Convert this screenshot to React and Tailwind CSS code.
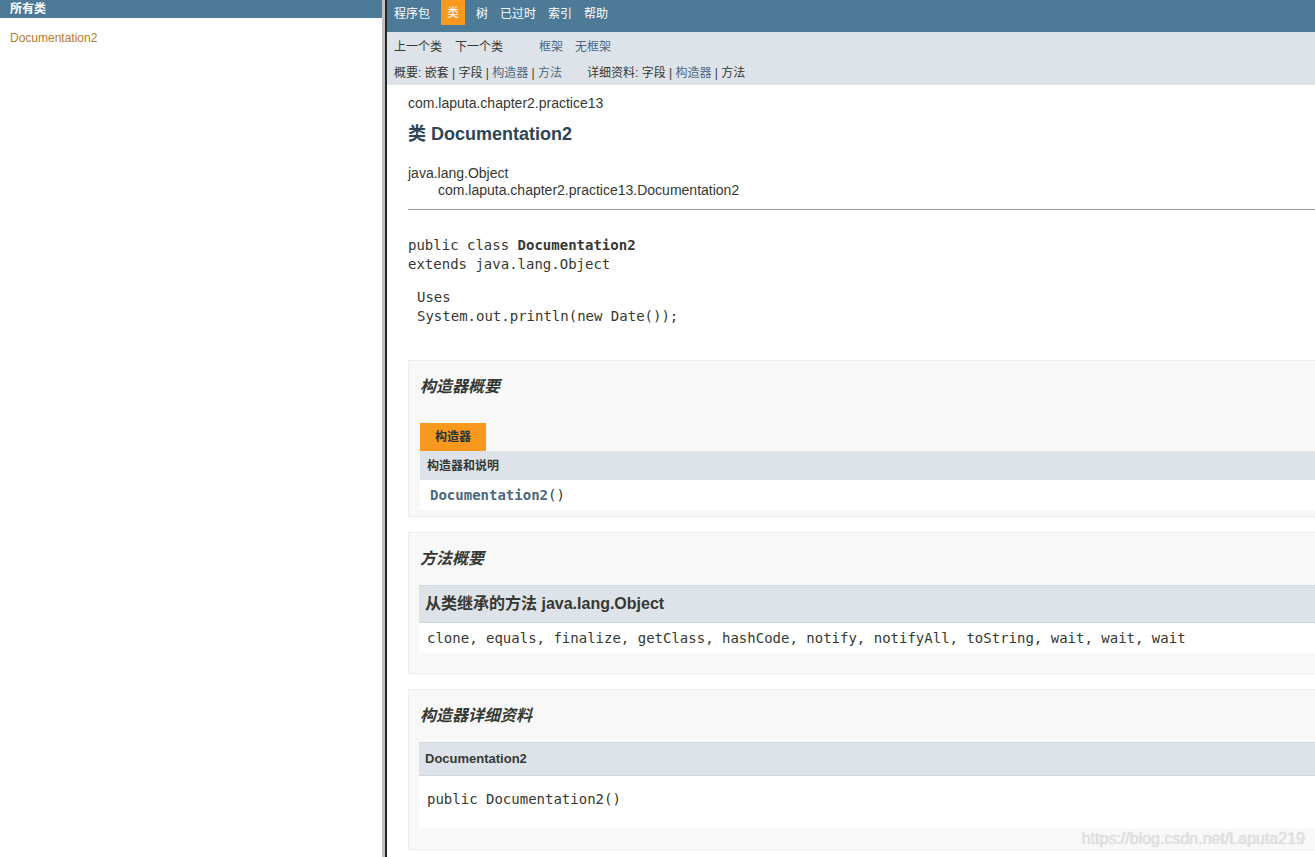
import React from 'react';

const sans = { fontFamily: '"Liberation Sans", Arial, "Noto Sans CJK SC", sans-serif' };
const mono = { fontFamily: '"DejaVu Sans Mono", monospace' };

const Block = ({ title, children, className = '' }) => (
  <div className={`border border-[#ededed] bg-[#f8f8f8] ${className}`}>
    <h3 className="pl-[11px] h-[52px] flex items-center text-[16px] italic font-bold text-[#353833]">{title}</h3>
    {children}
  </div>
);

export default function App() {
  return (
    <div className="flex h-[857px] w-[1315px] overflow-hidden bg-white text-[#353833]" style={sans}>
      {/* left frame */}
      <div className="w-[382px] shrink-0 bg-white">
        <div className="h-[18px] bg-[#4d7a97] pl-[10px] text-[12px] font-bold leading-[18px] text-white">所有类</div>
        <div className="pl-[10px] pt-[11px] text-[12px] text-[#bb7a2a]">Documentation2</div>
      </div>
      <div className="w-[3px] shrink-0 bg-[#c0c0c0]" />
      <div className="w-[2px] shrink-0 bg-[#262626]" />

      {/* right frame */}
      <div className="relative flex-1 overflow-hidden">
        <div className="h-[32px] bg-[#4d7a97] pl-[1px]">
          <ul className="flex text-[12px] text-white">
            <li className="h-[25px] px-[6px] pt-[2px] leading-[25px]">程序包</li>
            <li className="ml-[5px] h-[25px] bg-[#f8981d] px-[6px] pt-[2px] leading-[23px]">类</li>
            <li className="ml-[5px] h-[25px] px-[6px] pt-[2px] leading-[25px]">树</li>
            <li className="h-[25px] px-[6px] pt-[2px] leading-[25px]">已过时</li>
            <li className="h-[25px] px-[6px] pt-[2px] leading-[25px]">索引</li>
            <li className="h-[25px] px-[6px] pt-[2px] leading-[25px]">帮助</li>
          </ul>
        </div>
        <div className="h-[53px] bg-[#dee3e9] pl-[7px] text-[12px]">
          <div className="flex h-[27px] items-center pt-[3px]">
            <span>上一个类</span>
            <span className="ml-[13px]">下一个类</span>
            <span className="ml-[36px] text-[#4a6782]">框架</span>
            <span className="ml-[12px] text-[#4a6782]">无框架</span>
          </div>
          <div className="flex h-[26px] items-center pt-[2px]">
            <div className="w-[193px]">
              概要: 嵌套 | 字段 | <span className="text-[#4a6782]">构造器</span> | <span className="text-[#4a6782]">方法</span>
            </div>
            <div>
              详细资料: 字段 | <span className="text-[#4a6782]">构造器</span> | 方法
            </div>
          </div>
        </div>

        <div className="w-[970px] pl-[21px]">
          <div className="pt-[10px] text-[14px] leading-[17px]">com.laputa.chapter2.practice13</div>
          <h2 className="mt-[9px] h-[26px] text-[18px] font-bold leading-[26px] text-[#2c4557]">类 Documentation2</h2>
          <div className="mt-[18px] text-[14px] leading-[17px]">
            <div>java.lang.Object</div>
            <div className="pl-[30px]">com.laputa.chapter2.practice13.Documentation2</div>
          </div>
          <div className="mt-[10px] border-t border-[#999999]" />
          <div className="mt-[26px] text-[14px] leading-[19px]" style={mono}>
            <div>public class <span className="font-bold">Documentation2</span></div>
            <div>extends java.lang.Object</div>
            <div className="mt-[14px] pl-[9px]">Uses</div>
            <div className="pl-[9px]">System.out.println(new Date());</div>
          </div>

          <Block title="构造器概要" className="mt-[34px] pb-[6px]">
            <div className="ml-[11px]">
              <div className="mt-[10px] flex h-[28px] w-[66px] items-center justify-center bg-[#f8981d] text-[12px] font-bold text-[#253441]">构造器</div>
              <div className="flex h-[29px] items-center bg-[#dee3e9] pl-[7px] text-[12px] font-bold">构造器和说明</div>
              <div className="flex h-[30px] items-center bg-white pl-[10px] text-[14px]" style={mono}>
                <span className="font-bold text-[#4a6782]">Documentation2</span>()
              </div>
            </div>
          </Block>

          <Block title="方法概要" className="mt-[15px] pb-[20px]">
            <div className="ml-[10px]">
              <div className="flex h-[38px] items-center border-y border-[#d0d9e0] bg-[#dee3e9] pl-[6px] text-[16px] font-bold">从类继承的方法 java.lang.Object</div>
              <div className="flex h-[30px] items-center bg-white pl-[8px] text-[14px]" style={mono}>
                clone, equals, finalize, getClass, hashCode, notify, notifyAll, toString, wait, wait, wait
              </div>
            </div>
          </Block>

          <Block title="构造器详细资料" className="mt-[15px] pb-[21px]">
            <div className="ml-[10px]">
              <div className="flex h-[34px] items-center border-y border-[#d0d9e0] bg-[#dee3e9] pl-[6px] text-[13px] font-bold">Documentation2</div>
              <div className="h-[52px] bg-white pl-[8px] pt-[15px] text-[14px] leading-[17px]" style={mono}>
                public Documentation2()
              </div>
            </div>
          </Block>
        </div>

        <div className="absolute bottom-[9px] right-[10px] text-[16px] leading-[19px] text-[#e2e2e2] [text-shadow:0_0_1px_#c8c8c8]">https://blog.csdn.net/Laputa219</div>
      </div>
    </div>
  );
}
